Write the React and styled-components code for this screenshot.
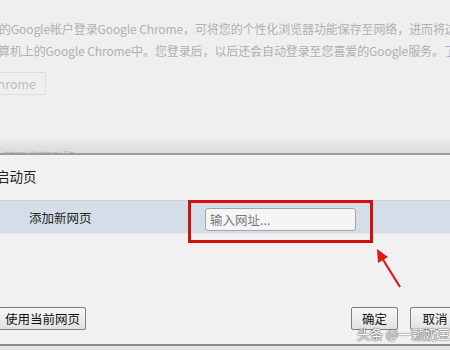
import React from "react";
import styled, { createGlobalStyle } from "styled-components";

const GlobalStyle = createGlobalStyle`
  html, body {
    margin: 0;
    padding: 0;
    background: #e9e9e9;
  }
  body {
    font-family: "Noto Sans CJK SC", "Liberation Sans", sans-serif;
  }
`;

const Page = styled.div`
  position: relative;
  width: 450px;
  height: 350px;
  overflow: hidden;
  display: flex;
  flex-direction: column;
  background: #efefef;
`;

const Settings = styled.div`
  height: 138px;
  padding: 20px 0 0 0;
  box-sizing: border-box;
  display: flex;
  flex-direction: column;
  gap: 4px;
`;

const SettingsLine = styled.div`
  white-space: nowrap;
  font-size: 12px;
  line-height: 18px;
  color: #b0b0b0;
  letter-spacing: -0.1px;
  margin-left: ${(p) => p.$shift || 0}px;
`;

const Link = styled.span`
  color: #8fa6d8;
`;

const GhostButton = styled.div`
  margin: 8px 0 0 -32px;
  width: 78px;
  height: 23px;
  box-sizing: border-box;
  border: 1px solid #dcdcdc;
  border-radius: 2px;
  font-size: 12.5px;
  line-height: 21px;
  color: #bdbdbd;
  text-align: right;
  padding-right: 9px;
`;

const Shade = styled.div`
  height: 15px;
  background: linear-gradient(#ebebeb, #dadada);
  overflow: hidden;
  font-size: 12px;
  line-height: 38px;
  color: #b8b8b8;
  white-space: nowrap;
`;

const Dialog = styled.div`
  position: relative;
  border-top: 2px solid #9c9c9c;
  background: #f1f1f1;
  height: 189px;
  display: flex;
  flex-direction: column;
  border-bottom: 2px solid #8d8d8d;
`;

const Title = styled.div`
  height: 45px;
  padding-top: 11px;
  box-sizing: border-box;
  margin-left: -4px;
  font-size: 13.5px;
  color: #222;
`;

const Row = styled.div`
  height: 32px;
  background: #d5dee8;
  border-top: 1px solid #c9d3de;
  border-bottom: 1px solid #e3e8ee;
  display: grid;
  grid-template-columns: 205px 151px;
  align-items: center;
`;

const Label = styled.div`
  padding-left: 29px;
  font-size: 12.5px;
  color: #222;
`;

const InputWrap = styled.div`
  position: relative;
  height: 23px;
`;

const Input = styled.input`
  width: 151px;
  height: 23px;
  box-sizing: border-box;
  border: 1px solid #a5a5a5;
  border-radius: 3px;
  background: #f5f5f5;
  padding: 0 4px;
  font-family: "Noto Sans CJK SC", sans-serif;
  font-size: 12.5px;
  outline: none;
  &::placeholder {
    color: #7a7a7a;
  }
`;

const Highlight = styled.div`
  position: absolute;
  left: -17px;
  top: -6px;
  width: 185px;
  height: 43px;
  box-sizing: border-box;
  border: 3px solid #d40d0d;
  pointer-events: none;
`;

const Arrow = styled.svg`
  position: absolute;
  left: 368px;
  top: 244px;
`;

const Spacer = styled.div`
  flex: 1;
`;

const Footer = styled.div`
  display: flex;
  align-items: center;
  padding-bottom: 14px;
`;

const Button = styled.div`
  height: 23px;
  box-sizing: border-box;
  border: 1px solid #7d7d7d;
  border-radius: 2px;
  background: linear-gradient(#f7f7f7, #e2e2e2);
  font-size: 12.5px;
  line-height: 21px;
  color: #111;
  text-align: center;
  width: ${(p) => p.$w}px;
  margin-left: ${(p) => p.$ml || 0}px;
  flex-shrink: 0;
`;

const Watermark = styled.div`
  position: absolute;
  left: 357px;
  top: 171px;
  font-size: 13px;
  line-height: 16px;
  color: #fafafa;
  white-space: nowrap;
  text-shadow: 0 0 1px #555, 0 0 1px #555, 0 0 2px #888;
`;

const Bottom = styled.div`
  flex: 1;
  background: #e6e6e6;
`;

export default function App() {
  return (
    <>
      <GlobalStyle />
      <Page>
        <Settings>
          <SettingsLine $shift={-1}>
            的Google帐户登录Google Chrome，可将您的个性化浏览器功能保存至网络，进而将这
          </SettingsLine>
          <SettingsLine $shift={-2}>
            算机上的Google Chrome中。您登录后，以后还会自动登录至您喜爱的Google服务。
            <Link>了解</Link>
          </SettingsLine>
          <GhostButton>hrome</GhostButton>
        </Settings>
        <Shade>&nbsp;管理搜索引擎</Shade>
        <Dialog>
          <Title>启动页</Title>
          <Row>
            <Label>添加新网页</Label>
            <InputWrap>
              <Input placeholder="输入网址..." />
              <Highlight />
            </InputWrap>
          </Row>
          <Spacer />
          <Footer>
            <Button $w={87} $ml={-1}>
              使用当前网页
            </Button>
            <Button $w={47} $ml={265}>
              确定
            </Button>
            <Button $w={50} $ml={12}>
              取消
            </Button>
          </Footer>
          <Watermark>头条 @一颗奶豆</Watermark>
        </Dialog>
        <Bottom />
        <Arrow width="40" height="50" viewBox="0 0 40 50">
          <line x1="32" y1="43" x2="14" y2="14" stroke="#e01818" strokeWidth="2.2" />
          <polygon points="9,5 20,13 10,19" fill="#e01818" />
        </Arrow>
      </Page>
    </>
  );
}
